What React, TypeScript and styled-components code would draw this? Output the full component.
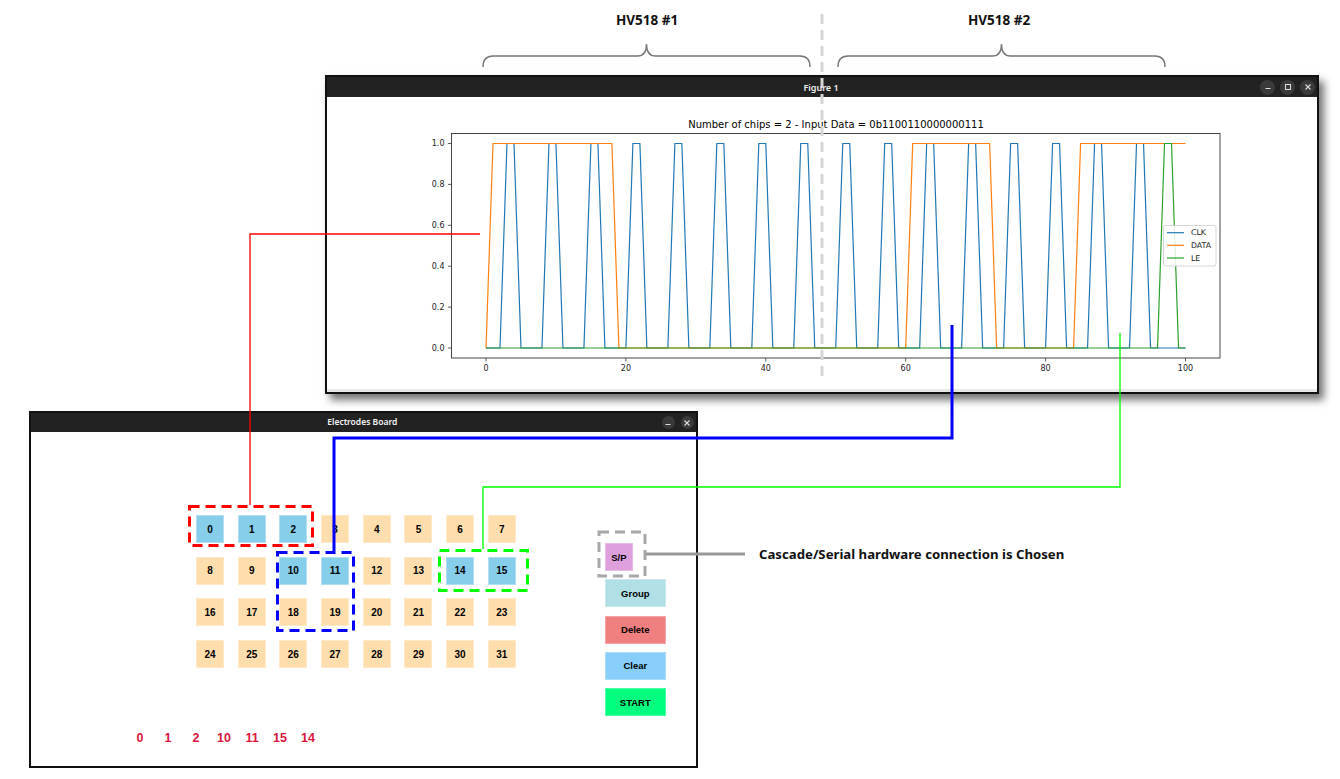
import React from "react";
import styled, { createGlobalStyle } from "styled-components";

const GlobalStyle = createGlobalStyle`
  html, body { margin: 0; padding: 0; background: #ffffff; }
  body { width: 1340px; height: 779px; overflow: hidden; font-family: "Liberation Sans", Arial, sans-serif; }
`;

const Desktop = styled.div`
  position: relative;
  width: 1340px;
  height: 779px;
  background: #ffffff;
  overflow: hidden;
`;

const Window = styled.div<{ $x: number; $y: number; $w: number; $h: number; $shadow?: boolean }>`
  position: absolute;
  left: ${(p) => p.$x}px;
  top: ${(p) => p.$y}px;
  width: ${(p) => p.$w}px;
  height: ${(p) => p.$h}px;
  box-sizing: border-box;
  border: 2px solid #111111;
  background: #ffffff;
  display: flex;
  flex-direction: column;
  box-shadow: ${(p) => (p.$shadow ? "5px 6px 8px rgba(0,0,0,0.55)" : "none")};
`;

const TitleBar = styled.div<{ $h: number; $pad: number }>`
  height: ${(p) => p.$h}px;
  flex: none;
  background: #222222;
  display: grid;
  grid-template-columns: 1fr auto 1fr;
  align-items: center;
  padding-right: ${(p) => p.$pad}px;
`;

const TitleText = styled.div<{ $size: number }>`
  grid-column: 2;
  color: #f2f2f2;
  font-family: "Noto Sans", "Open Sans", sans-serif;
  font-weight: 600;
  font-size: ${(p) => p.$size}px;
  line-height: 1;
  white-space: nowrap;
`;

const TitleButtons = styled.div<{ $gap: number }>`
  grid-column: 3;
  justify-self: end;
  display: flex;
  gap: ${(p) => p.$gap}px;
`;

const TitleButton = styled.div<{ $d: number }>`
  width: ${(p) => p.$d}px;
  height: ${(p) => p.$d}px;
  border-radius: 50%;
  background: #3a3a3a;
  display: flex;
  align-items: center;
  justify-content: center;
`;

const FigureBody = styled.div`
  flex: 1;
  display: flex;
  flex-direction: column;
`;

const ChartSvg = styled.svg`
  display: block;
  flex: none;
`;

const FooterStrip = styled.div`
  height: 3px;
  flex: none;
  background: #e8e8e8;
`;

const BoardBody = styled.div`
  flex: 1;
  display: flex;
  flex-direction: column;
  align-items: flex-start;
  padding-top: 83px;
`;

const BoardRow = styled.div`
  display: flex;
  align-items: flex-start;
  margin-left: 165px;
`;

const ElectrodeGrid = styled.div`
  display: grid;
  grid-template-columns: repeat(8, 28px);
  grid-auto-rows: 28px;
  gap: 13.7px;
`;

const Electrode = styled.div<{ $active: boolean }>`
  background: ${(p) => (p.$active ? "#87ceeb" : "#ffdead")};
  display: flex;
  align-items: center;
  justify-content: center;
  font: bold 10px "Liberation Sans", Arial, sans-serif;
  color: #000000;
  box-shadow: inset 0 0 0 1px rgba(255, 255, 255, 0.35);
`;

const Controls = styled.div`
  display: flex;
  flex-direction: column;
  align-items: flex-start;
  gap: 8.33px;
  margin-left: 89px;
  padding-top: 28px;
`;

const ControlButton = styled.div<{ $bg: string; $w: number }>`
  width: ${(p) => p.$w}px;
  height: 28px;
  background: ${(p) => p.$bg};
  display: flex;
  align-items: center;
  justify-content: center;
  font: bold 9.5px "Liberation Sans", Arial, sans-serif;
  color: #000000;
  box-shadow: inset 0 0 0 1px rgba(255, 255, 255, 0.3);
`;

const SelectedRow = styled.div`
  display: flex;
  margin-left: 95px;
  margin-top: 14px;
`;

const SelectedItem = styled.div`
  width: 28px;
  text-align: center;
  font: bold 12.5px/16px "Liberation Sans", Arial, sans-serif;
  color: #dc143c;
`;

const Overlay = styled.svg`
  position: absolute;
  left: 0;
  top: 0;
  pointer-events: none;
`;

const Annotation = styled.div<{ $x: number; $y: number; $center?: boolean; $size: number }>`
  position: absolute;
  left: ${(p) => p.$x}px;
  top: ${(p) => p.$y}px;
  transform: ${(p) => (p.$center ? "translateX(-50%)" : "none")};
  font-family: "Noto Sans", "Open Sans", sans-serif;
  font-weight: 700;
  font-size: ${(p) => p.$size}px;
  line-height: 20px;
  color: #111111;
  white-space: nowrap;
`;

const MinIcon = () => (
  <svg width="6" height="6" viewBox="0 0 6 6">
    <line x1="0.5" y1="4.5" x2="5.5" y2="4.5" stroke="#ddd" strokeWidth="1" />
  </svg>
);
const MaxIcon = () => (
  <svg width="6" height="6" viewBox="0 0 6 6">
    <rect x="0.5" y="0.5" width="5" height="5" fill="none" stroke="#ddd" strokeWidth="1" />
  </svg>
);
const CloseIcon = () => (
  <svg width="6" height="6" viewBox="0 0 6 6">
    <path d="M0.5 0.5 L5.5 5.5 M5.5 0.5 L0.5 5.5" stroke="#ddd" strokeWidth="1.1" />
  </svg>
);

const X = (u: number) => 486 + 6.995 * u;
const Y = (v: number) => 348 - 204.5 * v;
const pts = (arr: number[][]) => arr.map(([u, v]) => `${X(u).toFixed(2)},${Y(v).toFixed(2)}`).join(" ");

const clk: number[][] = [[0, 0]];
for (let k = 0; k < 16; k++) {
  clk.push([2 + 6 * k, 0], [3 + 6 * k, 1], [4 + 6 * k, 1], [5 + 6 * k, 0]);
}
clk.push([100, 0]);
const data = [[0, 0], [1, 1], [18, 1], [19, 0], [60, 0], [61, 1], [72, 1], [73, 0], [84, 0], [85, 1], [100, 1]];
const le = [[0, 0], [96, 0], [97, 1], [98, 1], [99, 0], [100, 0]];

const yTicks = [0, 0.2, 0.4, 0.6, 0.8, 1.0];
const xTicks = [0, 20, 40, 60, 80, 100];

const Chart = () => (
  <ChartSvg width={990} height={292} viewBox="327 97 990 292">
    <text x={836} y={128} textAnchor="middle" fontFamily="'DejaVu Sans', sans-serif" fontSize={10} fill="#000">
      Number of chips = 2 - Input Data = 0b1100110000000111
    </text>
    <polyline points={pts(clk)} fill="none" stroke="#1f77b4" strokeWidth={1.2} />
    <polyline points={pts(data)} fill="none" stroke="#ff7f0e" strokeWidth={1.2} />
    <polyline points={pts(le)} fill="none" stroke="#2ca02c" strokeWidth={1.2} />
    <rect x={451.5} y={133.5} width={768.5} height={224.5} fill="none" stroke="#333" strokeWidth={0.9} />
    {yTicks.map((t) => (
      <g key={t}>
        <line x1={448} y1={Y(t)} x2={451.5} y2={Y(t)} stroke="#333" strokeWidth={0.8} />
        <text x={444.5} y={Y(t)} dy="0.35em" textAnchor="end" fontFamily="'DejaVu Sans', sans-serif" fontSize={8} fill="#222">
          {t.toFixed(1)}
        </text>
      </g>
    ))}
    {xTicks.map((t) => (
      <g key={t}>
        <line x1={X(t)} y1={358} x2={X(t)} y2={361.5} stroke="#333" strokeWidth={0.8} />
        <text x={X(t)} y={370.5} textAnchor="middle" fontFamily="'DejaVu Sans', sans-serif" fontSize={8} fill="#222">
          {t}
        </text>
      </g>
    ))}
    <rect x={1163.5} y={225.5} width={52.5} height={40.5} rx={2} fill="rgba(255,255,255,0.85)" stroke="#cccccc" strokeWidth={0.8} />
    {[
      ["CLK", "#1f77b4", 232.7],
      ["DATA", "#ff7f0e", 245.3],
      ["LE", "#2ca02c", 258],
    ].map(([label, color, y]) => (
      <g key={label as string}>
        <line x1={1167} y1={y as number} x2={1184} y2={y as number} stroke={color as string} strokeWidth={1.2} />
        <text x={1191} y={y as number} dy="0.35em" fontFamily="'DejaVu Sans', sans-serif" fontSize={7.8} fill="#222">
          {label}
        </text>
      </g>
    ))}
  </ChartSvg>
);

const activeSet = new Set([0, 1, 2, 10, 11, 14, 15]);
const selected = [0, 1, 2, 10, 11, 15, 14];

const brace = (x1: number, x2: number) => {
  const m = (x1 + x2) / 2;
  const top = 44;
  const mid = 56;
  const bot = 67;
  return `M${x1} ${bot} Q${x1} ${mid} ${x1 + 10} ${mid} L${m - 9} ${mid} Q${m} ${mid} ${m} ${top} Q${m} ${mid} ${m + 9} ${mid} L${x2 - 10} ${mid} Q${x2} ${mid} ${x2} ${bot}`;
};

export default function App() {
  return (
    <Desktop>
      <GlobalStyle />
      <Window $x={325} $y={75} $w={994} $h={319} $shadow>
        <TitleBar $h={20} $pad={2}>
          <TitleText $size={9}>Figure 1</TitleText>
          <TitleButtons $gap={5}>
            <TitleButton $d={15}><MinIcon /></TitleButton>
            <TitleButton $d={15}><MaxIcon /></TitleButton>
            <TitleButton $d={15}><CloseIcon /></TitleButton>
          </TitleButtons>
        </TitleBar>
        <FigureBody>
          <Chart />
          <FooterStrip />
        </FigureBody>
      </Window>

      <Window $x={29} $y={411} $w={669} $h={357}>
        <TitleBar $h={19} $pad={2.5}>
          <TitleText $size={8.5}>Electrodes Board</TitleText>
          <TitleButtons $gap={6}>
            <TitleButton $d={13}><MinIcon /></TitleButton>
            <TitleButton $d={13}><CloseIcon /></TitleButton>
          </TitleButtons>
        </TitleBar>
        <BoardBody>
          <BoardRow>
            <ElectrodeGrid>
              {Array.from({ length: 32 }, (_, i) => (
                <Electrode key={i} $active={activeSet.has(i)}>{i}</Electrode>
              ))}
            </ElectrodeGrid>
            <Controls>
              <ControlButton $bg="#dda0dd" $w={28}>S/P</ControlButton>
              <ControlButton $bg="#b0e0e6" $w={61}>Group</ControlButton>
              <ControlButton $bg="#f08080" $w={61}>Delete</ControlButton>
              <ControlButton $bg="#87cefa" $w={61}>Clear</ControlButton>
              <ControlButton $bg="#00ff7f" $w={61}>START</ControlButton>
            </Controls>
          </BoardRow>
          <SelectedRow>
            {selected.map((n) => (
              <SelectedItem key={n}>{n}</SelectedItem>
            ))}
          </SelectedRow>
        </BoardBody>
      </Window>

      <Overlay width={1340} height={779} viewBox="0 0 1340 779">
        <path d={brace(483, 810)} fill="none" stroke="#777" strokeWidth={1.4} />
        <path d={brace(838, 1165)} fill="none" stroke="#777" strokeWidth={1.4} />
        <line x1={822} y1={14} x2={822} y2={380} stroke="#d6d6d6" strokeWidth={3} strokeDasharray="10 6" />

        <rect x={189.5} y={506.5} width={123} height={39} fill="none" stroke="#ff0000" strokeWidth={3} strokeDasharray="10 6" />
        <rect x={277.5} y={552.5} width={76} height={78} fill="none" stroke="#0000ff" strokeWidth={3} strokeDasharray="10 6" />
        <rect x={439.5} y={550.5} width={88} height={40} fill="none" stroke="#00ff00" strokeWidth={3} strokeDasharray="10 6" />
        <rect x={599} y={532} width={46} height={44} fill="none" stroke="#a8a8a8" strokeWidth={3} strokeDasharray="10 6" />
        <line x1={646} y1={554} x2={745} y2={554} stroke="#999" strokeWidth={3} />

        <polyline points="250,505 250,234 480,234" fill="none" stroke="#ff0000" strokeWidth={1.3} />
        <polyline points="334,551 334,438 952,438 952,325" fill="none" stroke="#0000ff" strokeWidth={3} />
        <polyline points="483,549 483,487 1120,487 1120,333" fill="none" stroke="#00ff00" strokeWidth={1.3} />
      </Overlay>

      <Annotation $x={647} $y={10} $center $size={13.5}>HV518 #1</Annotation>
      <Annotation $x={999} $y={10} $center $size={13.5}>HV518 #2</Annotation>
      <Annotation $x={759} $y={544} $size={13.2}>Cascade/Serial hardware connection is Chosen</Annotation>
    </Desktop>
  );
}
